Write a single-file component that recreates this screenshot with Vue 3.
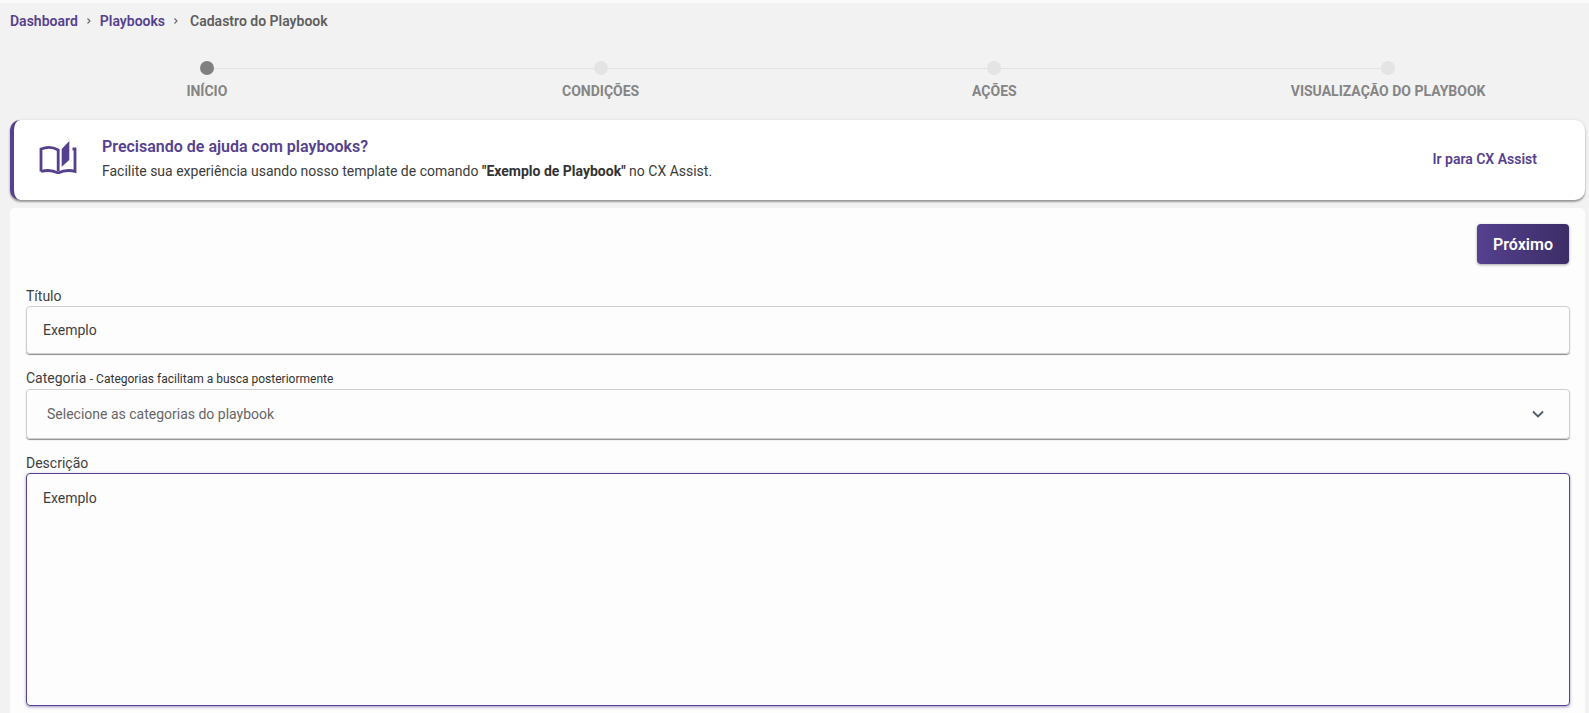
<script setup>
const steps = [
  { label: 'INÍCIO', active: true },
  { label: 'CONDIÇÕES' },
  { label: 'AÇÕES' },
  { label: 'VISUALIZAÇÃO DO PLAYBOOK' }
]
</script>

<template>
  <div class="page">
    <nav class="crumbs">
      <a>Dashboard</a>
      <svg class="sep" width="14" height="14" viewBox="0 0 14 14"><path d="M5.5 4.5 8 7l-2.5 2.5" fill="none" stroke="#666" stroke-width="1.1"/></svg>
      <a>Playbooks</a>
      <svg class="sep sep2" width="14" height="14" viewBox="0 0 14 14"><path d="M5.5 4.5 8 7l-2.5 2.5" fill="none" stroke="#666" stroke-width="1.1"/></svg>
      <span class="current">Cadastro do Playbook</span>
    </nav>

    <ol class="stepper">
      <li v-for="(s, i) in steps" :key="s.label" class="step" :class="{ active: s.active, last: i === steps.length - 1 }">
        <span class="dot"></span>
        <span class="step-label">{{ s.label }}</span>
      </li>
    </ol>

    <section class="notice">
      <svg class="book" width="38" height="33" viewBox="0 0 38 33">
        <path d="M2 30.500V8C7 6 14 6 19.200 9V30" fill="none" stroke="#55418f" stroke-width="2.800"/>
        <path d="M22.700 8 30.300 0V19L22.700 25.700z" fill="#55418f"/>
        <path d="M2 30.500C8 28.800 14 29.300 19.200 32C24.500 29.300 30 28.800 36 30.500V8H33.500" fill="none" stroke="#55418f" stroke-width="2.800"/>
      </svg>
      <div class="notice-text">
        <h2>Precisando de ajuda com playbooks?</h2>
        <p>Facilite sua experiência usando nosso template de comando <b>"Exemplo de Playbook"</b> no CX Assist.</p>
      </div>
      <a class="assist">Ir para CX Assist</a>
    </section>

    <main class="panel">
      <div class="actions">
        <button class="next">Próximo</button>
      </div>

      <label class="label">Título</label>
      <div class="field input">Exemplo</div>

      <label class="label cat">Categoria <small>- Categorias facilitam a busca posteriormente</small></label>
      <div class="field select">
        <span>Selecione as categorias do playbook</span>
        <svg width="14" height="10" viewBox="0 0 14 10"><path d="M2 2.500 7 7.500 12 2.500" fill="none" stroke="#4f5b66" stroke-width="1.800"/></svg>
      </div>

      <label class="label desc">Descrição</label>
      <div class="field textarea">Exemplo</div>
    </main>
  </div>
</template>

<style>
html, body { margin: 0; background: #f2f2f2; overflow: hidden; }
</style>

<style scoped>
.page {
  height: 713px;
  box-sizing: border-box;
  padding: 3px 4px 0 10px;
  overflow: hidden;
  background: #f2f2f2;
  font-family: Roboto, "Liberation Sans", sans-serif;
  color: #333;
  box-shadow: inset 0 3px 0 #fafafa;
}
.crumbs {
  display: flex;
  align-items: center;
  height: 36px;
  font-size: 14px;
  font-weight: 600;
}
.crumbs a { color: #55418f; }
.sep { margin: 0 4px 0 4px; }
.sep2 { margin-right: 7px; }
.current { color: #5f5f5f; }
.stepper {
  list-style: none;
  margin: 0;
  padding: 22px 0 0;
  display: grid;
  grid-template-columns: repeat(4, 1fr);
  height: 81px;
  box-sizing: border-box;
}
.step {
  position: relative;
  display: flex;
  flex-direction: column;
  align-items: center;
}
.step::after {
  content: '';
  position: absolute;
  top: 7px;
  left: 50%;
  width: 100%;
  height: 1px;
  background: #e3e3e3;
}
.step.last::after { display: none; }
.dot {
  position: relative;
  z-index: 1;
  width: 14px;
  height: 14px;
  border-radius: 50%;
  background: #e4e4e4;
}
.active .dot { background: #808080; }
.step-label {
  margin-top: 8px;
  font-size: 14px;
  font-weight: 700;
  line-height: 17px;
  color: #858585;
}
.notice {
  display: flex;
  align-items: center;
  height: 80px;
  box-sizing: border-box;
  background: #fff;
  border-left: 4px solid #55418f;
  border-radius: 10px;
  box-shadow: 0 2px 2px rgba(0,0,0,.35), 0 0 3px rgba(0,0,0,.1);
  padding-left: 25px;
}
.book { flex: none; margin-bottom: 5px; }
.notice-text { flex: 1; margin: 0 0 4px 25px; }
.notice-text h2 {
  margin: 0 0 7px;
  font-size: 16px;
  line-height: 19px;
  font-weight: 600;
  color: #55418f;
}
.notice-text p {
  margin: 0;
  font-size: 14px;
  line-height: 17px;
  color: #3c3c3c;
}
.notice-text b { font-weight: 700; color: #333; }
.assist {
  margin-right: 48px;
  margin-bottom: 2px;
  font-size: 14px;
  font-weight: 600;
  color: #55418f;
}
.panel {
  margin-top: 8px;
  background: #fdfdfd;
  border-radius: 5px 5px 0 0;
  padding: 16px 16px 0 16px;
  height: 520px;
  box-sizing: border-box;
}
.actions { display: flex; justify-content: flex-end; }
.next {
  width: 92px;
  height: 40px;
  border: 0;
  border-radius: 4px;
  background: linear-gradient(90deg, #55418f, #3c2d66);
  color: #fff;
  font: 600 16px Roboto, sans-serif;
  box-shadow: 0 1px 3px rgba(0,0,0,.35);
}
.label {
  display: block;
  margin-top: 23px;
  font-size: 14px;
  line-height: 19px;
  color: #3f3f3f;
}
.label.cat { margin-top: 15px; line-height: 19px; }
.label.cat small { font-size: 12px; color: #333; }
.label.desc { margin-top: 15px; line-height: 19px; }
.field {
  box-sizing: border-box;
  margin-right: -1px;
  background: transparent;
  border: 1px solid #cfcfcf;
  border-radius: 4px;
  box-shadow: 0 1px 1px rgba(0,0,0,.45);
  font-size: 14px;
  color: #3f3f3f;
}
.input {
  height: 48px;
  display: flex;
  align-items: center;
  padding-left: 16px;
}
.select {
  height: 50px;
  display: flex;
  align-items: center;
  justify-content: space-between;
  padding: 0 24px 0 20px;
  color: #666;
}
.textarea {
  height: 233px;
  padding: 16px 16px;
  line-height: 17px;
  border-color: #55418f;
  box-shadow: 0 1px 3px rgba(85,65,143,.55);
}
</style>
